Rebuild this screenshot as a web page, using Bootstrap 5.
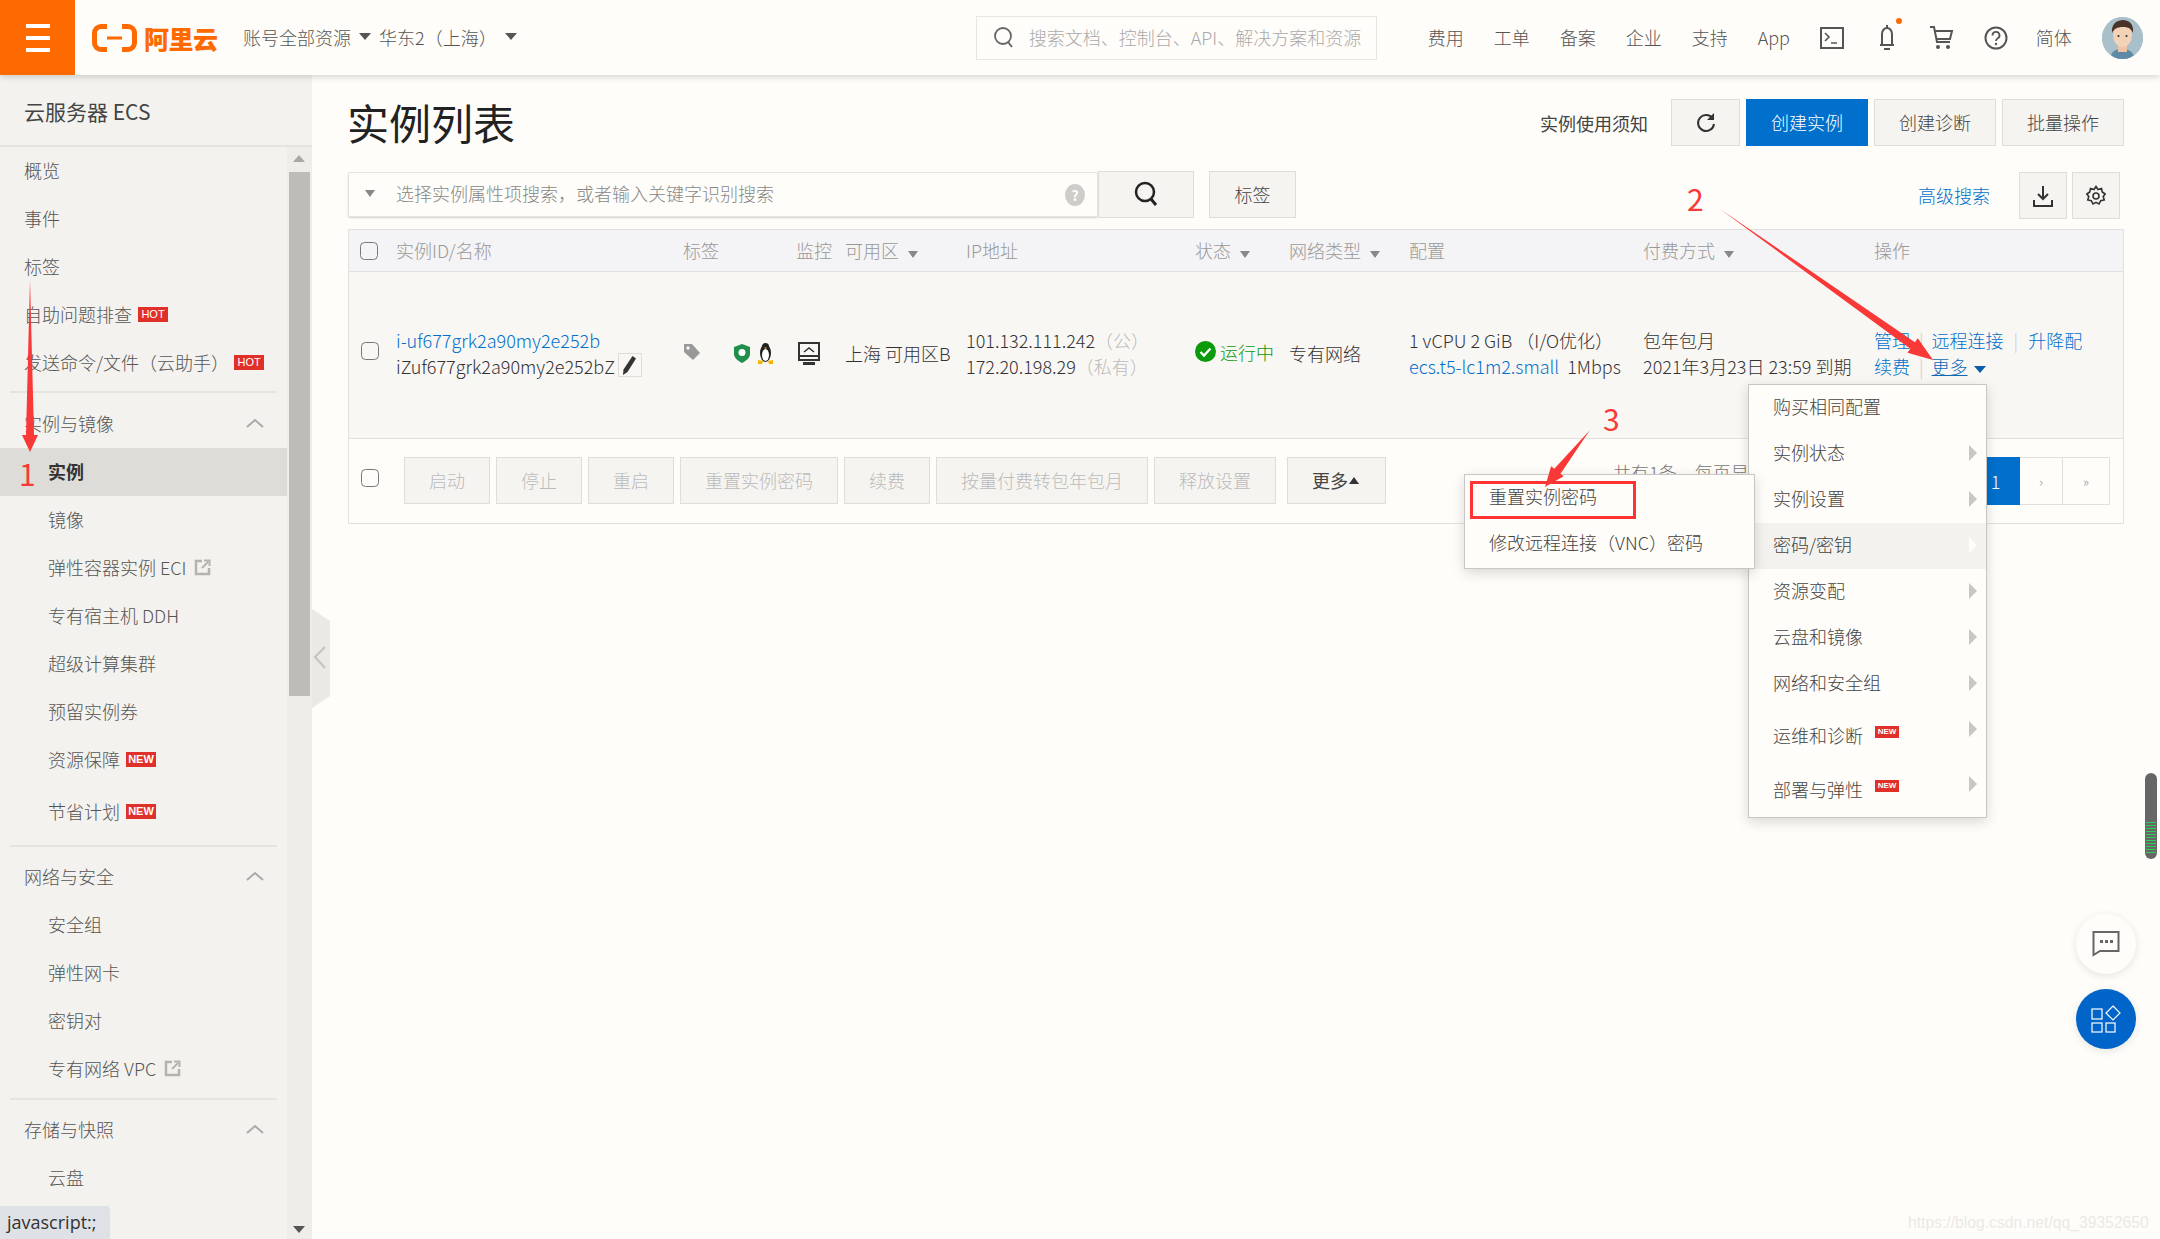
<!DOCTYPE html>
<html lang="zh-CN">
<head>
  <meta charset="UTF-8">
  <meta name="viewport" content="width=device-width, initial-scale=1.0">
  <title>实例列表</title>
  <link rel="stylesheet" href="https://cdn.jsdelivr.net/npm/bootstrap@5.3.0/dist/css/bootstrap.min.css">
  <style>
    html, body { height: 1239px; overflow: hidden; }
    body { background: #fffdf9; color: #333; font-family: "Noto Sans CJK SC", "Liberation Sans", sans-serif; font-size: 18px; font-weight: 300; line-height: 26px; position: relative; }
    a { color: #0070cc; text-decoration: none; }

    .topbar { height: 75px; background: #fffdf9; box-shadow: 0 2px 6px rgba(0,0,0,.16); position: relative; z-index: 5; }
    .burger { width: 75px; height: 75px; background: #ff6a00; }
    .burger span { display: block; width: 24px; height: 4px; background: #fff; margin: 4px 0; }
    .logo { margin-left: 17px; width: 151px; color: #ff6a00; font-size: 25px; font-weight: 900; letter-spacing: -.5px; gap: 7px; }
    .caret-d { width: 0; height: 0; border: 6px solid transparent; border-top: 7px solid #555; border-bottom: 0; display: inline-block; }
    .caret-g { border-top-color: #888; border-left-width: 5px; border-right-width: 5px; }
    .region { color: #555; padding-bottom: 2px; }
    .top-search { width: 401px; height: 44px; margin-left: 459px; border: 1px solid #e8e6e2; color: #aaa; padding-left: 16px; gap: 10px; overflow: hidden; white-space: nowrap; }
    .top-search span { overflow: hidden; width: 333px; padding-bottom: 2px; margin-left: 4px; }
    .top-nav { color: #555; margin-left: 51px; }
    .top-nav .t { width: 66px; padding-bottom: 2px; }
    .top-nav .t-app { width: 62px; padding-bottom: 2px; }
    .top-nav .i-bell { margin-left: 33px; }
    .top-nav .i-cart { margin-left: 32px; }
    .top-nav .i-help { margin-left: 29px; }
    .top-nav .lang { margin: 0 30px 2px 28px; }
    .bell-dot { width: 6px; height: 6px; border-radius: 50%; background: #ff6a00; position: absolute; left: 1896px; top: 18px; z-index: 6; }
    .avatar { width: 41px; height: 42px; border-radius: 50%; background: #a9c0cb; overflow: hidden; }

    .layout { height: 1164px; }
    .sidebar { width: 312px; background: #f4f2ee; flex: none; }
    .side-title { height: 72px; border-bottom: 2px solid #e6e4e0; padding: 2px 0 0 24px; font-size: 21px; color: #444; font-weight: 400; }
    .side-body { height: 1092px; overflow: hidden; }
    .side-list { width: 287px; }
    .side-track { width: 25px; background: #efede9; position: relative; }
    .side-thumb { width: 21px; height: 524px; margin: 25px 0 0 2px; background: #bdbcb7; }
    .tri-up, .tri-down { width: 0; height: 0; border: 6px solid transparent; position: absolute; left: 6px; }
    .tri-up { top: 8px; border-bottom: 7px solid #a9a8a4; border-top: 0; }
    .tri-down { bottom: 6px; border-top: 7px solid #555; border-bottom: 0; }
    .side-item { height: 48px; padding: 0 0 2px 24px; color: #555; }
    .side-item.sub { padding-left: 48px; }
    .side-item.active { background: #dedcd8; color: #333; font-weight: 700; }
    .side-item.gap-top { margin-top: 4px; }
    .side-rule { border-bottom: 2px solid #e6e4e0; margin: 4px 10px 7px; }
    .side-rule.r2 { margin: 9px 10px 6px; }
    .side-rule.r3 { margin: 5px 10px 6px; }
    .chev { width: 20px; height: 10px; margin-left: auto; margin-right: 22px; }
    .tag-hot { background: #e0302a; color: #fff; font-size: 11px; line-height: 15px; height: 15px; width: 30px; text-align: center; font-family: "Liberation Sans", sans-serif; margin-left: 6px; font-weight: 400; }
    .tag-hot.after-paren { margin-left: 5px; }
    .tag-new { font-weight: 700; }
    .tag-new.small { margin: -6px 0 0 12px; width: 24px; height: 12px; line-height: 12px; font-size: 8px; }
    .collapse-handle { position: absolute; left: 312px; top: 609px; width: 18px; height: 99px; z-index: 3; }

    .main { padding: 0 36px; min-width: 0; }
    .title-row { height: 73px; margin-top: 24px; }
    .title-row h1 { font-size: 42px; line-height: 48px; margin: -1px 0 0 -1px; font-weight: 400; color: #222; }
    .title-actions { gap: 6px; }
    .notice { margin-right: 17px; font-weight: 400; color: #444; }
    .btn-ali { height: 47px; border: 1px solid #e0ddd9; background: #f6f4f1; color: #444; border-radius: 0; padding: 0 24px; font-size: 18px; font-weight: 300; line-height: 45px; white-space: nowrap; }
    .btn-ali.primary { background: #0070cc; border-color: #0070cc; color: #fff; }
    .btn-ali.off:disabled { color: #bbb; opacity: 1; background: #f6f4f1; border-color: #e0ddd9; }
    .btn-ali.square { padding: 0; display: flex; align-items: center; justify-content: center; }
    .w-refresh { width: 69px; }
    .w-find { width: 96px; }
    .w-tag { width: 87px; padding: 0; margin-left: 15px; }
    .w-tool { width: 48px; margin-top: 1px; }
    .w-tool.last { margin: 1px 4px 0 5px; }
    .w-more { width: 99px; padding: 0 0 0 24px; margin-left: 5px; font-weight: 400; display: flex; align-items: center; }
    .tri-mini { width: 0; height: 0; border: 5px solid transparent; border-bottom: 7px solid #333; border-top: 0; margin-left: 1px; }
    .adv-link { margin-right: 29px; }
    .search-row { height: 47px; margin-bottom: 11px; margin-top: -1px; }
    .search-box { width: 750px; height: 45px; margin-top: 1px; border: 1px solid #e6e4e0; box-shadow: 0 1px 2px rgba(0,0,0,.18); border-radius: 2px; padding: 0 12px 3px 16px; color: #888; }
    .search-box .caret-d { margin-right: 21px; }
    .help-dot { width: 20px; height: 22px; border-radius: 50%; background: #cfcdc9; color: #fff; font-size: 14px; line-height: 22px; text-align: center; font-weight: 700; margin-top: 3px; }

    .ecs-wrap { border: 1px solid #e3e1dd; }
    .ecs-table { table-layout: fixed; width: 1774px; margin: 0; --bs-table-bg: transparent; color: #333; }
    .ecs-table th { height: 41px; background: #f4f3f5; color: #999; font-weight: 300; padding: 0 0 0 12px; vertical-align: middle; border-bottom: 1px solid #e3e1dd; white-space: nowrap; }
    .ecs-table td { height: 167px; background: #f9f7f4; padding: 0 0 3px 12px; vertical-align: middle; border-bottom: 1px solid #e3e1dd; white-space: nowrap; }
    .c1 { width: 35px; } .c2 { width: 287px; } .c3 { width: 113px; } .c4 { width: 49px; } .c5 { width: 121px; } .c6 { width: 229px; } .c7 { width: 94px; } .c8 { width: 120px; } .c9 { width: 234px; } .c10 { width: 231px; } .c11 { width: 261px; }
    .ecs-check { width: 18px; height: 18px; margin: 0; border: 1px solid #777; border-radius: 3px; background: transparent; vertical-align: middle; }
    .ecs-table th .ecs-check { margin: -5px 0 0 -1px; }
    .ecs-table td .ecs-check { margin: -4px 0 0 0; display: block; }
    .muted { color: #bbb; }
    .sort { margin-left: 9px; vertical-align: 0; }
    .more-caret { margin-left: 6px; vertical-align: 1px; border-top-color: #0b5ea8; }
    .pen-box { width: 24px; height: 24px; border: 1px solid #e0ddd9; margin-left: 3px; vertical-align: top; display: inline-flex; align-items: center; justify-content: center; }
    .tag-cell svg { display: block; margin-bottom: 2px; }
    .watch-cell { padding-left: 0 !important; overflow: visible; }
    .watch-icons { margin-left: -51px; gap: 6px; }
    .watch-icons .i-mon { margin-left: 18px; }
    .run { color: #0a9a0a; }
    .sep { color: #ccc; margin: 0 9px; }
    .sep.a { margin-right: 8px; }
    .sep.b { margin: 0 10px; }
    .more-link { text-decoration: underline; color: #0a68b4; }
    .tbl-foot { height: 84px; padding-left: 12px; gap: 6px; position: relative; }
    .tbl-foot .ecs-check { margin: -5px 19px 0 0; }
    .pager { margin-left: auto; margin-right: 13px; }
    .pager span { height: 48px; border: 1px solid #e3e1dd; border-left: 0; color: #999; display: flex; align-items: center; justify-content: center; font-size: 14px; }
    .pager .cur { background: #0070cc; border-color: #0070cc; color: #fff; width: 48px; font-size: 18px; }
    .pager .p1 { width: 43px; }
    .pager .p2 { width: 47px; }
    .page-info { position: absolute; left: 1264px; top: 20px; color: #777; }

    .ecs-menu { position: absolute; display: block; padding: 0; margin: 0; border-radius: 0; border: 1px solid #c9c7c3; background: #fffdf9; box-shadow: 0 4px 12px rgba(0,0,0,.15); font-size: 18px; z-index: 10; }
    .ecs-menu .dropdown-item { height: 46px; display: flex; align-items: center; color: #444; padding: 0 0 4px 24px; font-weight: 300; position: relative; }
    .ecs-menu .dropdown-item.on { background: #f4f2ee; }
    .menu-main { left: 1748px; top: 384px; width: 239px; height: 434px; }
    .menu-sub { left: 1464px; top: 474px; width: 291px; height: 95px; }
    .arrow-r { position: absolute; right: 9px; top: 14px; width: 0; height: 0; border: 8px solid transparent; border-left: 8px solid #c9c7c3; border-right: 0; }
    .arrow-r.lite { border-left-color: #fffdf9; }
    .ecs-menu .dropdown-item.tall { height: 57px; padding-bottom: 2px; }
    .ecs-menu .dropdown-item.tall.end { padding-bottom: 8px; }
    .tall.end .arrow-r { top: 12px; }
    .red-box { position: absolute; left: 5px; top: 6px; width: 166px; height: 38px; border: 3px solid #f33; }

    .status-tip { position: absolute; left: 0; bottom: 0; width: 110px; height: 33px; background: #dee1e6; border-top-right-radius: 4px; font-family: "Open Sans", "Liberation Sans", sans-serif; font-size: 18px; font-weight: 400; line-height: 33px; padding-left: 7px; color: #333; z-index: 20; }
    .float-btn { position: absolute; left: 2076px; width: 60px; height: 60px; border-radius: 50%; box-shadow: 0 2px 8px rgba(0,0,0,.1); z-index: 6; }
    .float-chat { top: 914px; background: #fffdf9; }
    .float-app { top: 989px; background: #0064c8; }
    .side-widget { position: absolute; left: 2145px; top: 773px; width: 12px; height: 86px; border-radius: 6px; background: #666; overflow: hidden; z-index: 6; padding: 49px 1px 0; }
    .side-widget i { display: block; height: 33px; background: repeating-linear-gradient(#2ed158 0 1px, transparent 1px 3px); }
    .watermark { position: absolute; left: 1908px; top: 1210px; font-family: "Liberation Sans", sans-serif; font-size: 15.700px; font-weight: 400; color: #ebe9e5; z-index: 6; white-space: nowrap; }
    .marks { position: absolute; left: 0; top: 0; z-index: 30; pointer-events: none; }
    .marks text { font-family: "Noto Sans CJK SC", sans-serif; font-size: 30px; fill: #f93838; font-weight: 400; }
  </style>
</head>
<body>
  <header class="topbar d-flex align-items-center">
    <div class="burger d-flex flex-column align-items-center justify-content-center"><span></span><span></span><span></span></div>
    <div class="logo d-flex align-items-center">
      <svg width="45" height="28" viewBox="0 0 45 28"><path d="M15 2.500H9a6.500 6.500 0 0 0-6.500 6.500v10A6.500 6.500 0 0 0 9 25.500h6M30 2.500h6a6.500 6.500 0 0 1 6.500 6.500v10a6.500 6.500 0 0 1-6.500 6.500h-6" fill="none" stroke="#ff6a00" stroke-width="5"/><rect x="15" y="12.500" width="15" height="3" fill="#ff6a00"/></svg>
      <span>阿里云</span>
    </div>
    <div class="region d-flex align-items-center"><span>账号全部资源</span><span class="caret-d ms-2 me-2"></span><span>华东2（上海）</span><span class="caret-d ms-2"></span></div>
    <div class="top-search d-flex align-items-center">
      <svg width="22" height="24" viewBox="0 0 22 24" class="flex-shrink-0"><circle cx="10" cy="10" r="8" fill="none" stroke="#666" stroke-width="1.800"/><path d="M15 16l4 5" stroke="#666" stroke-width="2"/></svg>
      <span>搜索文档、控制台、API、解决方案和资源</span>
    </div>
    <nav class="top-nav d-flex align-items-center">
      <span class="t">费用</span><span class="t">工单</span><span class="t">备案</span><span class="t">企业</span><span class="t">支持</span><span class="t-app">App</span>
      <svg width="24" height="26" viewBox="0 0 24 26"><rect x="1" y="3" width="22" height="20" fill="none" stroke="#555" stroke-width="2"/><path d="M5 8l4 4-4 4M11 18h6" fill="none" stroke="#555" stroke-width="1.600"/></svg>
      <svg class="i-bell" width="20" height="28" viewBox="0 0 20 28"><path d="M10 1v3M5 20V10a5 6 0 0 1 10 0v10M3 21h14M7 25h6" fill="none" stroke="#555" stroke-width="2"/></svg>
      <svg class="i-cart" width="26" height="26" viewBox="0 0 26 26"><path d="M1 2h4l3 15h13M6 6h17l-2 8H8" fill="none" stroke="#555" stroke-width="2"/><circle cx="9" cy="22" r="2" fill="#555"/><circle cx="19" cy="22" r="2" fill="#555"/></svg>
      <svg class="i-help" width="24" height="24" viewBox="0 0 24 24"><circle cx="12" cy="12" r="10.500" fill="none" stroke="#555" stroke-width="2"/><path d="M8.500 9.500a3.500 3.500 0 1 1 5 3c-1 .6-1.500 1.200-1.500 2.500" fill="none" stroke="#555" stroke-width="1.800"/><circle cx="12" cy="18" r="1.200" fill="#555"/></svg>
      <span class="lang">简体</span>
      <div class="avatar">
        <svg width="41" height="42" viewBox="0 0 41 42"><rect width="41" height="42" fill="#a9c0cb"/><path d="M8 42c1-8 6-10 12-10s11 2 13 10z" fill="#5e8aa5"/><rect x="16" y="26" width="9" height="9" fill="#eec4a6"/><ellipse cx="20.500" cy="18" rx="9.500" ry="12" fill="#f4d2b8"/><path d="M10 16c-1-10 6-13 11-13s11 3 10 13c-2-4-4-6-10-6s-9 2-11 6z" fill="#4a3428"/><circle cx="16.500" cy="19" r="1.100" fill="#333"/><circle cx="24.500" cy="19" r="1.100" fill="#333"/></svg>
      </div>
    </nav>
  </header>

  <div class="layout d-flex">
    <aside class="sidebar d-flex flex-column">
      <div class="side-title d-flex align-items-center">云服务器 ECS</div>
      <div class="side-body d-flex">
        <div class="side-list">
          <div class="side-item d-flex align-items-center">概览</div>
          <div class="side-item d-flex align-items-center">事件</div>
          <div class="side-item d-flex align-items-center">标签</div>
          <div class="side-item d-flex align-items-center">自助问题排查<span class="tag-hot">HOT</span></div>
          <div class="side-item d-flex align-items-center">发送命令/文件（云助手）<span class="tag-hot after-paren">HOT</span></div>
          <div class="side-rule"></div>
          <div class="side-item d-flex align-items-center">实例与镜像<svg class="chev" viewBox="0 0 20 10"><path d="M2 9l8-7 8 7" fill="none" stroke="#aaa" stroke-width="2"/></svg></div>
          <div class="side-item sub active d-flex align-items-center">实例</div>
          <div class="side-item sub d-flex align-items-center">镜像</div>
          <div class="side-item sub d-flex align-items-center">弹性容器实例 ECI
            <svg class="ms-2" width="17" height="17" viewBox="0 0 17 17"><path d="M8 2H2v13h13V9" fill="none" stroke="#b4b3af" stroke-width="2.500"/><path d="M8 9l6-6M10 1.500h5.500V7" fill="none" stroke="#b4b3af" stroke-width="2"/></svg></div>
          <div class="side-item sub d-flex align-items-center">专有宿主机 DDH</div>
          <div class="side-item sub d-flex align-items-center">超级计算集群</div>
          <div class="side-item sub d-flex align-items-center">预留实例券</div>
          <div class="side-item sub d-flex align-items-center">资源保障<span class="tag-hot tag-new">NEW</span></div>
          <div class="side-item sub gap-top d-flex align-items-center">节省计划<span class="tag-hot tag-new">NEW</span></div>
          <div class="side-rule r2"></div>
          <div class="side-item d-flex align-items-center">网络与安全<svg class="chev" viewBox="0 0 20 10"><path d="M2 9l8-7 8 7" fill="none" stroke="#aaa" stroke-width="2"/></svg></div>
          <div class="side-item sub d-flex align-items-center">安全组</div>
          <div class="side-item sub d-flex align-items-center">弹性网卡</div>
          <div class="side-item sub d-flex align-items-center">密钥对</div>
          <div class="side-item sub d-flex align-items-center">专有网络 VPC
            <svg class="ms-2" width="17" height="17" viewBox="0 0 17 17"><path d="M8 2H2v13h13V9" fill="none" stroke="#b4b3af" stroke-width="2.500"/><path d="M8 9l6-6M10 1.500h5.500V7" fill="none" stroke="#b4b3af" stroke-width="2"/></svg></div>
          <div class="side-rule r3"></div>
          <div class="side-item d-flex align-items-center">存储与快照<svg class="chev" viewBox="0 0 20 10"><path d="M2 9l8-7 8 7" fill="none" stroke="#aaa" stroke-width="2"/></svg></div>
          <div class="side-item sub d-flex align-items-center">云盘</div>
        </div>
        <div class="side-track">
          <span class="tri-up"></span>
          <div class="side-thumb"></div>
          <span class="tri-down"></span>
        </div>
      </div>
    </aside>

    <main class="main flex-grow-1">
      <div class="title-row d-flex align-items-start justify-content-between">
        <h1>实例列表</h1>
        <div class="title-actions d-flex align-items-center">
          <span class="notice">实例使用须知</span>
          <button class="btn btn-ali square w-refresh">
            <svg width="22" height="22" viewBox="0 0 22 22"><path d="M18 7a8 8 0 1 0 1 5" fill="none" stroke="#333" stroke-width="2"/><path d="M19 1v7h-7" fill="#333"/></svg>
          </button>
          <button class="btn btn-ali primary">创建实例</button>
          <button class="btn btn-ali">创建诊断</button>
          <button class="btn btn-ali">批量操作</button>
        </div>
      </div>

      <div class="search-row d-flex align-items-start">
        <div class="search-box d-flex align-items-center">
          <span class="caret-d caret-g"></span>
          <span>选择实例属性项搜索，或者输入关键字识别搜索</span>
          <span class="help-dot ms-auto">?</span>
        </div>
        <button class="btn btn-ali square w-find">
          <svg width="26" height="28" viewBox="0 0 26 28"><circle cx="12" cy="11" r="9" fill="none" stroke="#222" stroke-width="2.500"/><path d="M18 18l5 6" stroke="#222" stroke-width="3"/></svg>
        </button>
        <button class="btn btn-ali w-tag">标签</button>
        <a href="#" class="adv-link ms-auto align-self-center">高级搜索</a>
        <button class="btn btn-ali square w-tool">
          <svg width="20" height="22" viewBox="0 0 20 22"><path d="M10 1v13M5 9l5 5 5-5M1 15v6h18v-6" fill="none" stroke="#333" stroke-width="2"/></svg>
        </button>
        <button class="btn btn-ali square w-tool last">
          <svg width="20" height="22" viewBox="0 0 20 22"><path d="M10 1.500l2 3 3.500-1 .7 3.500 3 2-2 2.500 1 3.500-3.500.7-1.700 3.300-3-1.700-3 1.700-1.700-3.300-3.500-.7 1-3.500-2-2.500 3-2 .7-3.500 3.500 1z" fill="none" stroke="#333" stroke-width="1.600"/><circle cx="10" cy="11" r="3" fill="none" stroke="#333" stroke-width="1.600"/></svg>
        </button>
      </div>

      <div class="ecs-wrap">
        <table class="table ecs-table">
          <colgroup>
            <col class="c1"><col class="c2"><col class="c3"><col class="c4"><col class="c5"><col class="c6"><col class="c7"><col class="c8"><col class="c9"><col class="c10"><col class="c11">
          </colgroup>
          <thead>
            <tr>
              <th><input class="form-check-input ecs-check" type="checkbox"></th>
              <th>实例ID/名称</th>
              <th>标签</th>
              <th>监控</th>
              <th>可用区<span class="caret-d caret-g sort"></span></th>
              <th>IP地址</th>
              <th>状态<span class="caret-d caret-g sort"></span></th>
              <th>网络类型<span class="caret-d caret-g sort"></span></th>
              <th>配置</th>
              <th>付费方式<span class="caret-d caret-g sort"></span></th>
              <th>操作</th>
            </tr>
          </thead>
          <tbody>
            <tr>
              <td><input class="form-check-input ecs-check" type="checkbox"></td>
              <td>
                <div><a href="#">i-uf677grk2a90my2e252b</a></div>
                <div>iZuf677grk2a90my2e252bZ<span class="pen-box">
                  <svg width="15" height="21" viewBox="0 0 15 21"><path d="M10.500 1l3.500 2.500-8.500 13.500-4.500 3 .5-5.500z" fill="#333"/></svg>
                </span></div>
              </td>
              <td class="tag-cell"><svg width="18" height="18" viewBox="0 0 18 18"><path d="M1 1h8l8 9-7 7-9-8z" fill="#999"/><circle cx="5" cy="5" r="1.700" fill="#f9f7f4"/></svg></td>
              <td class="watch-cell">
                <div class="watch-icons d-flex align-items-center">
                  <svg width="18" height="19" viewBox="0 0 18 19"><path d="M9 0l8 3v7c0 4-4 7-8 9-4-2-8-5-8-9V3z" fill="#1f8f4b"/><circle cx="9" cy="8.500" r="3.500" fill="#fff"/></svg>
                  <svg width="17" height="22" viewBox="0 0 17 22"><ellipse cx="8.500" cy="11" rx="5.500" ry="9" fill="#222"/><circle cx="8.500" cy="4.500" r="3.500" fill="#222"/><ellipse cx="8.500" cy="13" rx="3.500" ry="6" fill="#fff"/><path d="M7 5.500h3l-1.500 1.500z" fill="#f5b400"/><path d="M1 18l5 1-1 3H1zM16 18l-5 1 1 3h4z" fill="#f5b400"/></svg>
                  <svg class="i-mon" width="22" height="23" viewBox="0 0 22 23"><rect x="1" y="1" width="20" height="17" fill="none" stroke="#333" stroke-width="2"/><path d="M1 14h20" stroke="#333" stroke-width="2"/><path d="M6 10l5-4 5 4" fill="none" stroke="#333" stroke-width="1.500"/><rect x="5" y="20" width="12" height="3" fill="#333"/></svg>
                </div>
              </td>
              <td>上海 可用区B</td>
              <td>
                <div>101.132.111.242<span class="muted">（公）</span></div>
                <div>172.20.198.29<span class="muted">（私有）</span></div>
              </td>
              <td class="run"><span class="d-inline-flex align-items-center gap-1">
                <svg width="21" height="21" viewBox="0 0 21 21"><circle cx="10.500" cy="10.500" r="10.500" fill="#0a9a0a"/><path d="M5.500 11l3.500 3.500 6.500-7" fill="none" stroke="#fff" stroke-width="2.400"/></svg>运行中</span></td>
              <td>专有网络</td>
              <td>
                <div>1 vCPU 2 GiB （I/O优化）</div>
                <div><a href="#">ecs.t5-lc1m2.small</a><span class="ms-2">1Mbps</span></div>
              </td>
              <td>
                <div>包年包月</div>
                <div>2021年3月23日 23:59 到期</div>
              </td>
              <td>
                <div><a href="#">管理</a><span class="sep a">|</span><a href="#">远程连接</a><span class="sep b">|</span><a href="#">升降配</a></div>
                <div><a href="#">续费</a><span class="sep a">|</span><a href="#" class="more-link">更多</a><span class="caret-d more-caret"></span></div>
              </td>
            </tr>
          </tbody>
        </table>
        <div class="tbl-foot d-flex align-items-center">
          <input class="form-check-input ecs-check" type="checkbox">
          <button class="btn btn-ali off" disabled>启动</button>
          <button class="btn btn-ali off" disabled>停止</button>
          <button class="btn btn-ali off" disabled>重启</button>
          <button class="btn btn-ali off" disabled>重置实例密码</button>
          <button class="btn btn-ali off" disabled>续费</button>
          <button class="btn btn-ali off" disabled>按量付费转包年包月</button>
          <button class="btn btn-ali off" disabled>释放设置</button>
          <button class="btn btn-ali w-more">更多<span class="tri-mini"></span></button>
          <span class="page-info">共有1条，每页显示</span>
          <div class="pager d-flex">
            <span class="cur">1</span><span class="p1">›</span><span class="p2">»</span>
          </div>
        </div>
      </div>
    </main>
  </div>

  <!-- 弹出菜单 -->
  <ul class="dropdown-menu ecs-menu menu-main list-unstyled">
    <li><span class="dropdown-item">购买相同配置</span></li>
    <li><span class="dropdown-item">实例状态<i class="arrow-r"></i></span></li>
    <li><span class="dropdown-item">实例设置<i class="arrow-r"></i></span></li>
    <li><span class="dropdown-item on">密码/密钥<i class="arrow-r lite"></i></span></li>
    <li><span class="dropdown-item">资源变配<i class="arrow-r"></i></span></li>
    <li><span class="dropdown-item">云盘和镜像<i class="arrow-r"></i></span></li>
    <li><span class="dropdown-item">网络和安全组<i class="arrow-r"></i></span></li>
    <li><span class="dropdown-item tall">运维和诊断<span class="tag-hot tag-new small">NEW</span><i class="arrow-r"></i></span></li>
    <li><span class="dropdown-item tall end">部署与弹性<span class="tag-hot tag-new small">NEW</span><i class="arrow-r"></i></span></li>
  </ul>
  <ul class="dropdown-menu ecs-menu menu-sub list-unstyled">
    <li><span class="dropdown-item">重置实例密码</span></li>
    <li><span class="dropdown-item">修改远程连接（VNC）密码</span></li>
    <li class="red-box"></li>
  </ul>

  <!-- 侧栏收起 -->
  <svg class="collapse-handle" viewBox="0 0 18 99"><path d="M0 0l18 12v75L0 99z" fill="#ebe9e6"/><path d="M13 38L3 48l10 11" fill="none" stroke="#c4c3bf" stroke-width="2"/></svg>
  <span class="bell-dot"></span>
  <div class="status-tip">javascript:;</div>

  <div class="side-widget"><i></i></div>
  <div class="float-btn float-chat d-flex align-items-center justify-content-center">
    <svg width="28" height="28" viewBox="0 0 28 28"><path d="M1.500 2h25v19H8l-6.500 4z" fill="none" stroke="#666" stroke-width="2"/><rect x="8" y="10" width="3" height="3" fill="#666"/><rect x="13" y="10" width="3" height="3" fill="#666"/><rect x="18" y="10" width="3" height="3" fill="#666"/></svg>
  </div>
  <div class="float-btn float-app d-flex align-items-center justify-content-center">
    <svg width="30" height="28" viewBox="0 0 30 28"><rect x="1" y="4" width="10" height="10" fill="none" stroke="#fff" stroke-width="1.200"/><rect x="1" y="18" width="10" height="9" fill="none" stroke="#fff" stroke-width="1.200"/><rect x="15" y="18" width="9" height="9" fill="none" stroke="#fff" stroke-width="1.200"/><path d="M22 1l7 7-7 7-7-7z" fill="none" stroke="#fff" stroke-width="1.200"/></svg>
  </div>
  <div class="watermark">https://blog.csdn.net/qq_39352650</div>

  <!-- 红色标注 -->
  <svg class="marks" width="2160" height="1239" viewBox="0 0 2160 1239">
    <polygon points="30,280 34,435 38,435 30,452 22,435 26,435" fill="#f93838"/>
    <polygon points="1720,209 1914.900,342.200 1917.800,338.200 1933,360 1907.400,352.800 1910.300,348.800" fill="#f93838"/>
    <polygon points="1590,430 1560.500,473.800 1563.700,476.300 1545,487 1551.100,466.300 1554.300,468.800" fill="#f93838"/>
    <text x="19" y="486">1</text>
    <text x="1687" y="211">2</text>
    <text x="1603" y="431">3</text>
  </svg>
</body>
</html>
